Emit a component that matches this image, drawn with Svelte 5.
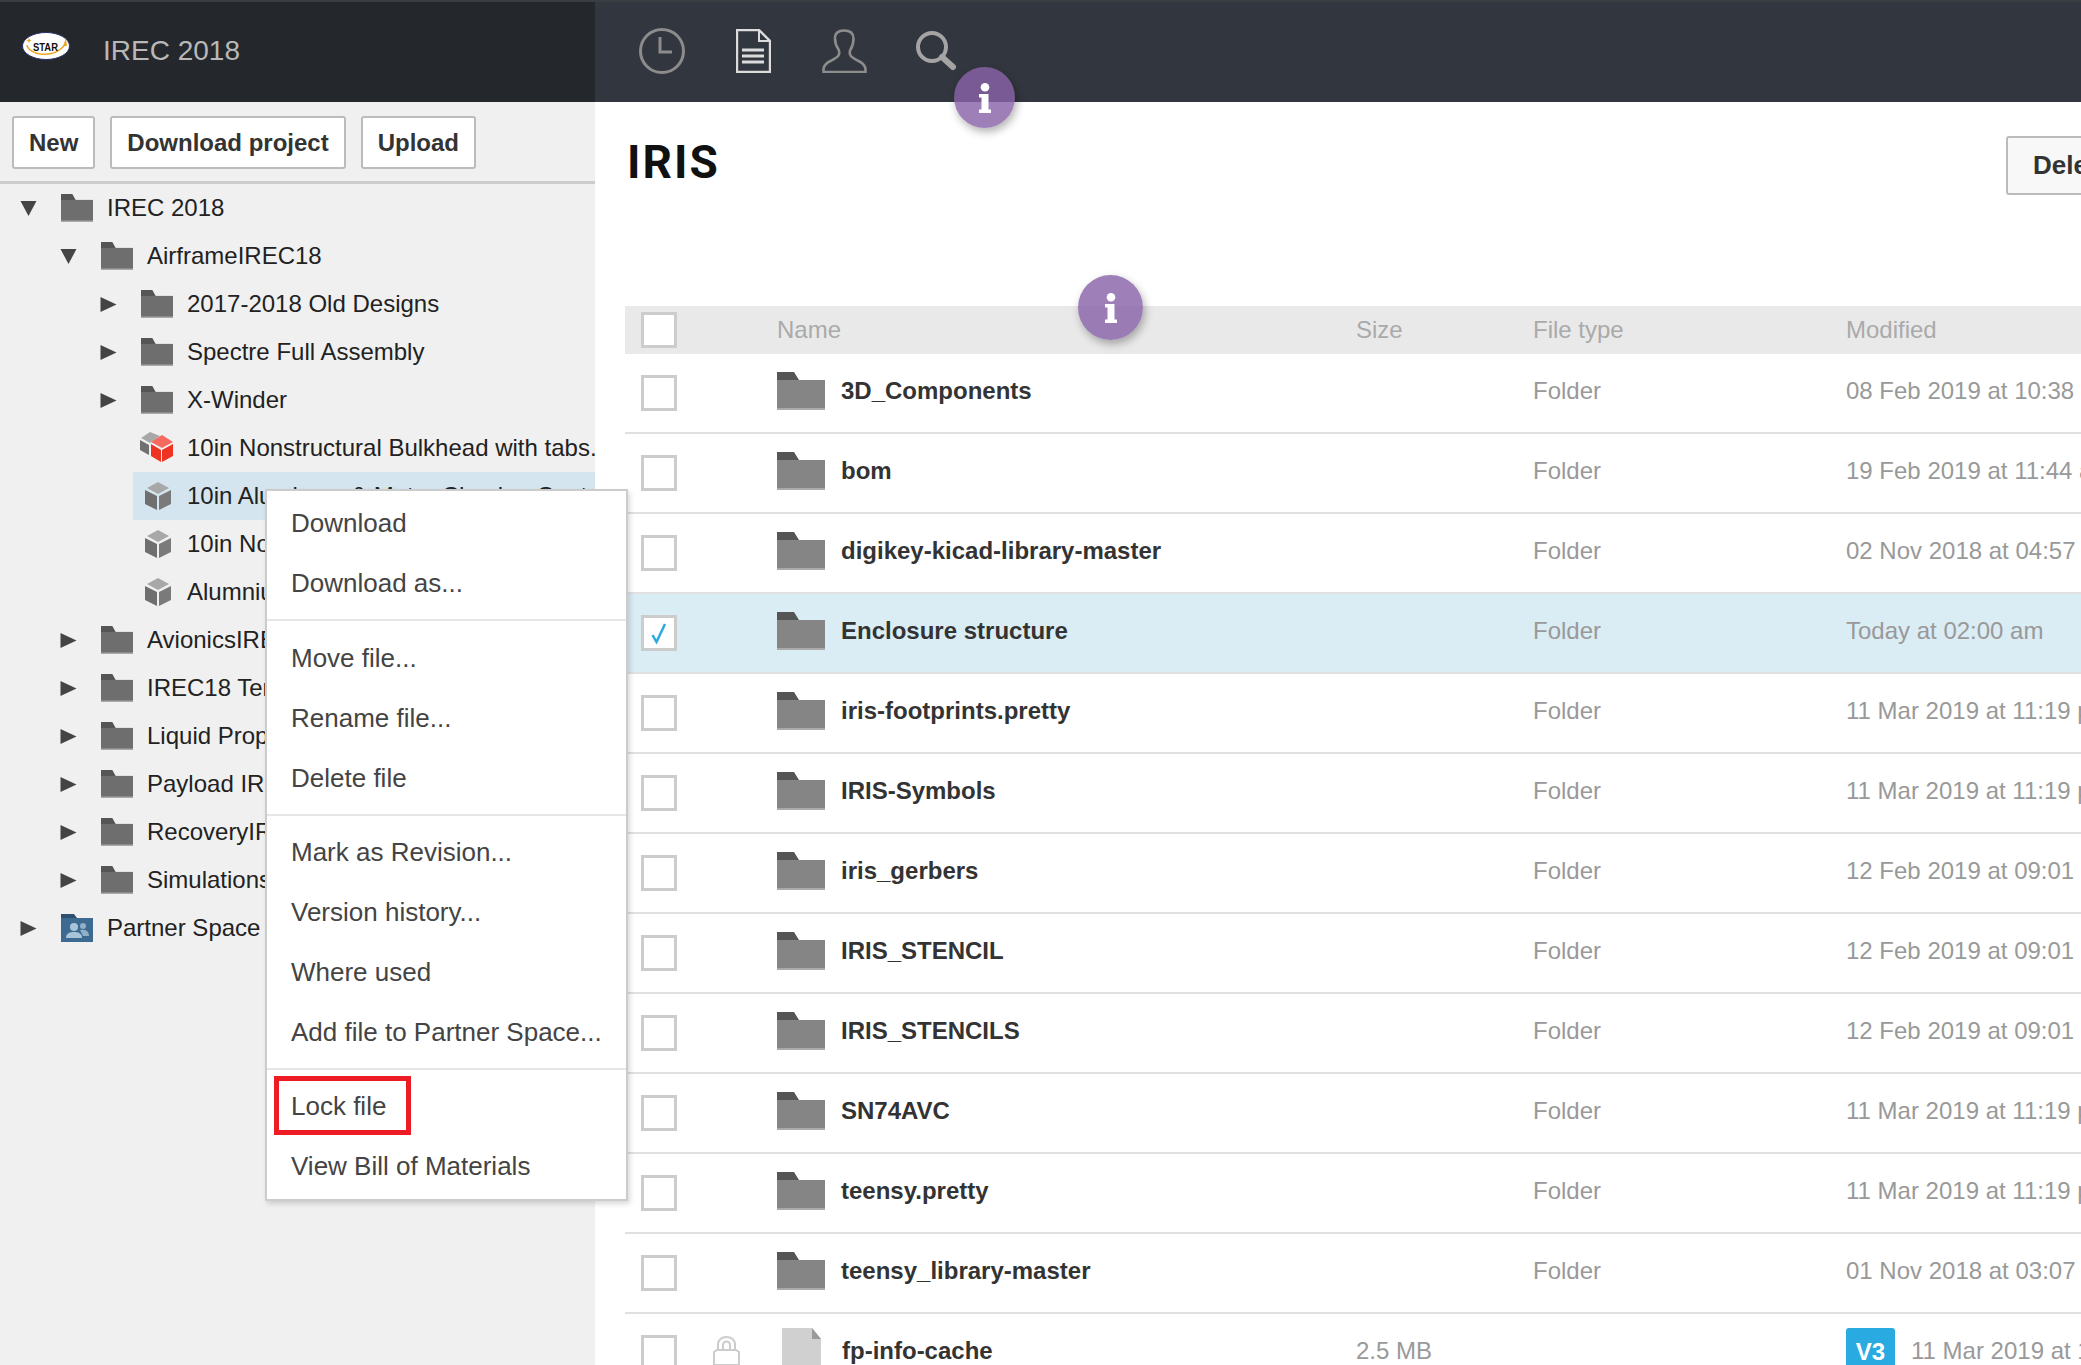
<script lang="ts">
  const tree = [
    { depth: 0, arrow: 'down', icon: 'folder', label: 'IREC 2018' },
    { depth: 1, arrow: 'down', icon: 'folder', label: 'AirframeIREC18' },
    { depth: 2, arrow: 'right', icon: 'folder', label: '2017-2018 Old Designs' },
    { depth: 2, arrow: 'right', icon: 'folder', label: 'Spectre Full Assembly' },
    { depth: 2, arrow: 'right', icon: 'folder', label: 'X-Winder' },
    { depth: 2, icon: 'redcube', label: '10in Nonstructural Bulkhead with tabs.' },
    { depth: 2, icon: 'cube', label: '10in Aluminum & Motor Chasing Coat', selected: true },
    { depth: 2, icon: 'cube', label: '10in Nonstructural Bulkhead' },
    { depth: 2, icon: 'cube', label: 'Alumnium Bulkhead' },
    { depth: 1, arrow: 'right', icon: 'folder', label: 'AvionicsIREC18' },
    { depth: 1, arrow: 'right', icon: 'folder', label: 'IREC18 Termination' },
    { depth: 1, arrow: 'right', icon: 'folder', label: 'Liquid Propulsion' },
    { depth: 1, arrow: 'right', icon: 'folder', label: 'Payload IREC18' },
    { depth: 1, arrow: 'right', icon: 'folder', label: 'RecoveryIREC18' },
    { depth: 1, arrow: 'right', icon: 'folder', label: 'Simulations' },
    { depth: 0, arrow: 'right', icon: 'partner', label: 'Partner Space' }
  ];

  const menu = [
    ['Download', 'Download as...'],
    ['Move file...', 'Rename file...', 'Delete file'],
    ['Mark as Revision...', 'Version history...', 'Where used', 'Add file to Partner Space...'],
    ['Lock file', 'View Bill of Materials']
  ];

  const rows = [
    { name: '3D_Components', modified: '08 Feb 2019 at 10:38 am' },
    { name: 'bom', modified: '19 Feb 2019 at 11:44 am' },
    { name: 'digikey-kicad-library-master', modified: '02 Nov 2018 at 04:57 pm' },
    { name: 'Enclosure structure', modified: 'Today at 02:00 am', selected: true },
    { name: 'iris-footprints.pretty', modified: '11 Mar 2019 at 11:19 pm' },
    { name: 'IRIS-Symbols', modified: '11 Mar 2019 at 11:19 pm' },
    { name: 'iris_gerbers', modified: '12 Feb 2019 at 09:01 pm' },
    { name: 'IRIS_STENCIL', modified: '12 Feb 2019 at 09:01 pm' },
    { name: 'IRIS_STENCILS', modified: '12 Feb 2019 at 09:01 pm' },
    { name: 'SN74AVC', modified: '11 Mar 2019 at 11:19 pm' },
    { name: 'teensy.pretty', modified: '11 Mar 2019 at 11:19 pm' },
    { name: 'teensy_library-master', modified: '01 Nov 2018 at 03:07 am' }
  ];
</script>

{#snippet folderIcon(cls, body)}
  <svg class={cls} viewBox="0 0 48 38" preserveAspectRatio="none" aria-hidden="true">
    <path d="M0 0h17l5 8H0z" fill="#555" />
    <path d="M0 8h48v30H0z" fill={body} />
    <path d="M0 36h48v2H0z" fill="#aaa" />
  </svg>
{/snippet}

{#snippet cubeIcon(red)}
  {#if red}
    <svg class="tree-icon red-cube" viewBox="0 0 33 30" aria-hidden="true">
      <path d="M1 6l9-6 10 4-10 7z" fill="#a8a8a8" />
      <path d="M0 8l9 5v10L0 18z" fill="#707070" />
      <path d="M22 3l11 7-11 6-11-6z" fill="#f56a60" />
      <path d="M11 12l10 6v12l-10-6z" fill="#ee3322" />
      <path d="M33 12v12l-11 6V18z" fill="#ee3322" />
    </svg>
  {:else}
    <svg class="tree-icon cube" viewBox="0 0 28 28" aria-hidden="true">
      <path d="M14 0l11 6-11 6L3 6z" fill="#a8a8a8" />
      <path d="M1 8l12 6v14L1 22z" fill="#6f6f6f" />
      <path d="M27 8v14l-12 6V14z" fill="#7a7a7a" />
    </svg>
  {/if}
{/snippet}

{#snippet infoIcon()}
  <svg class="hint-icon" viewBox="0 0 12 30" aria-hidden="true">
    <circle cx="6" cy="4.300" r="4.300" fill="#fff" />
    <path d="M0 11h9.500v15.500H12V30H0v-3.500h2.500v-12H0z" fill="#fff" />
  </svg>
{/snippet}

<div class="page">
  <header class="topbar">
    <div class="brand">
      <svg class="logo" viewBox="0 0 48 28" aria-hidden="true">
        <ellipse cx="24" cy="14" rx="23.500" ry="13.500" fill="#fff" stroke="#27306a" stroke-width="1" />
        <path d="M5 13c1 9 24 15 37 1" fill="none" stroke="#e8a623" stroke-width="1.500" />
        <path d="M41 14l3-8 1 8z" fill="#e8a623" />
        <path d="M7 6l1 2 2 0-2 1-1 2-1-2-2-1 2 0z" fill="#e8a623" />
        <text x="11" y="18.500" textLength="25" lengthAdjust="spacingAndGlyphs" class="logo-text">STAR</text>
      </svg>
      <span class="brand-name">IREC 2018</span>
    </div>
    <nav class="nav">
      <svg class="nav-icon clock" viewBox="0 0 46 46" aria-hidden="true">
        <circle cx="23" cy="23" r="21.500" fill="none" stroke="#8c8c8c" stroke-width="3" />
        <path d="M21 9v15h12" fill="none" stroke="#8c8c8c" stroke-width="3" />
      </svg>
      <svg class="nav-icon doc" viewBox="0 0 35 44" aria-hidden="true">
        <path d="M1 1h22l11 11v31H1z" fill="none" stroke="#dcdcdc" stroke-width="2.400" />
        <path d="M23 1v11h11" fill="none" stroke="#dcdcdc" stroke-width="2" />
        <path d="M6 21h22M6 27h22M6 33h22" stroke="#dcdcdc" stroke-width="3" />
      </svg>
      <svg class="nav-icon person" viewBox="0 0 45 44" aria-hidden="true">
        <path d="M22 1.500c6 0 9.500 2.500 9.500 8 0 5-1 8-3 11-1 2-1 4 0 6 1 2 4 3 7 5 5 2 7.500 5 8 8.500v3H1.500v-3c.500-3.500 3-6.500 8-8.500 3-2 6-3 7-5 1-2 1-4 0-6-2-3-3.500-6-3.500-11 0-5.500 3-8 9-8z" fill="none" stroke="#8c8c8c" stroke-width="2.600" />
      </svg>
      <svg class="nav-icon search" viewBox="0 0 41 40" aria-hidden="true">
        <circle cx="16" cy="16" r="14" fill="none" stroke="#a4a4a4" stroke-width="4" />
        <path d="M26 26l11 10" stroke="#a4a4a4" stroke-width="6" stroke-linecap="round" />
      </svg>
    </nav>
  </header>

  <div class="body">
    <aside class="sidebar">
      <div class="toolbar">
        <button class="btn">New</button>
        <button class="btn">Download project</button>
        <button class="btn">Upload</button>
      </div>
      <ul class="tree">
        {#each tree as item}
          <li class="tree-row depth-{item.depth}">
            <span class="arrow-slot">
              {#if item.arrow === 'down'}
                <svg class="arrow" viewBox="0 0 16 15" aria-hidden="true"><path d="M0 0h16L8 15z" fill="#444" /></svg>
              {:else if item.arrow === 'right'}
                <svg class="arrow" viewBox="0 0 16 15" aria-hidden="true"><path d="M0 0l16 7.500L0 15z" fill="#444" /></svg>
              {/if}
            </span>
            <span class="tree-item" class:selected={item.selected}>
              {#if item.icon === 'folder'}
                {@render folderIcon('tree-icon', '#6e6e6e')}
              {:else if item.icon === 'partner'}
                <svg class="tree-icon" viewBox="0 0 32 28" aria-hidden="true">
                  <path d="M0 0h13l3 4v4H0z" fill="#2f4f6f" />
                  <path d="M0 4h32v24H0z" fill="#3d6a90" />
                  <circle cx="13" cy="13" r="4" fill="#a9c4d8" />
                  <path d="M5 24c0-5 4-6 8-6s8 1 8 6z" fill="#a9c4d8" />
                  <circle cx="22" cy="12" r="3" fill="#8fb0c8" />
                  <path d="M19 16c4-1 9 0 9 6h-6z" fill="#8fb0c8" />
                </svg>
              {:else}
                {@render cubeIcon(item.icon === 'redcube')}
              {/if}
              <span class="tree-label">{item.label}</span>
            </span>
          </li>
        {/each}
      </ul>
    </aside>

    <main class="main">
      <div class="title-row">
        <h1>IRIS</h1>
        <button class="btn delete">Delete</button>
      </div>
      <div class="table">
        <div class="row head">
          <span class="cell check"><span class="box"></span></span>
          <span class="cell lock"></span>
          <span class="cell name">Name</span>
          <span class="cell size">Size</span>
          <span class="cell type">File type</span>
          <span class="cell modified">Modified</span>
        </div>
        {#each rows as row}
          <div class="row item" class:selected={row.selected}>
            <span class="cell check">
              <span class="box">{#if row.selected}<svg viewBox="0 0 16 22" aria-hidden="true"><path d="M1.500 13l4 7L14 2" fill="none" stroke="#29abe2" stroke-width="2.500" /></svg>{/if}</span>
            </span>
            <span class="cell lock"></span>
            <span class="cell name">
              {@render folderIcon('row-icon', '#858585')}
              <b>{row.name}</b>
            </span>
            <span class="cell size"></span>
            <span class="cell type">Folder</span>
            <span class="cell modified">{row.modified}</span>
          </div>
        {/each}
        <div class="row item">
          <span class="cell check"><span class="box"></span></span>
          <span class="cell lock">
            <svg viewBox="0 0 27 30" aria-hidden="true">
              <path d="M5 14V8a8.500 7 0 0 1 17 0v6" fill="none" stroke="#ccc" stroke-width="2" />
              <path d="M10 14V9a3.500 3.500 0 0 1 7 0v5" fill="none" stroke="#ccc" stroke-width="2" />
              <path d="M1 16l3-2h19l3 2v13H1z" fill="none" stroke="#ccc" stroke-width="2" />
            </svg>
          </span>
          <span class="cell name">
            <svg class="row-file" viewBox="0 0 39 48" aria-hidden="true">
              <path d="M0 0h30l9 11v37H0z" fill="#d0d0d0" />
              <path d="M30 0l9 11h-9z" fill="#9a9a9a" />
            </svg>
            <b>fp-info-cache</b>
          </span>
          <span class="cell size">2.5 MB</span>
          <span class="cell type"></span>
          <span class="cell modified"><span class="version">V3</span>11 Mar 2019 at 11:19 pm</span>
        </div>
      </div>
    </main>
  </div>

  <div class="menu">
    {#each menu as group}
      <ul class="menu-group">
        {#each group as label}
          <li class="menu-item"><span class:lock-box={label === 'Lock file'}>{label}</span></li>
        {/each}
      </ul>
    {/each}
  </div>

  <span class="hint hint-top">{@render infoIcon()}</span>
  <span class="hint hint-table">{@render infoIcon()}</span>
</div>

<style>
  :global(body) {
    margin: 0;
    background: #fff;
  }

  .page {
    position: relative;
    width: 2081px;
    height: 1365px;
    overflow: hidden;
    font-family: "Liberation Sans", Arial, sans-serif;
    font-size: 24px;
    color: #222;
  }

  .topbar {
    display: flex;
    height: 102px;
    box-sizing: border-box;
    border-top: 2px solid #3a3d42;
    background: #32363e;
  }

  .brand {
    width: 595px;
    display: flex;
    align-items: center;
    gap: 33px;
    padding: 0 0 2px 22px;
    box-sizing: border-box;
    background: #24272b;
  }

  .logo {
    width: 48px;
    height: 28px;
    margin-bottom: 10px;
  }

  .logo-text {
    font: 700 11px "Liberation Sans", sans-serif;
    fill: #111;
  }

  .brand-name {
    font-size: 28px;
    color: #b8b8b8;
  }

  .nav {
    display: flex;
    align-items: center;
    padding: 0 0 2px 44px;
  }

  .nav-icon {
    height: 44px;
    flex: none;
  }

  .clock {
    width: 46px;
    height: 46px;
    margin-right: 51px;
  }

  .doc {
    width: 35px;
    margin-right: 51px;
  }

  .person {
    width: 45px;
    margin-right: 49px;
  }

  .search {
    width: 41px;
    height: 40px;
  }

  .body {
    display: flex;
    height: 1263px;
  }

  .sidebar {
    width: 595px;
    flex: none;
    background: #f0f0f0;
  }

  .toolbar {
    display: flex;
    gap: 15px;
    height: 82px;
    padding: 14px 12px 0;
    box-sizing: border-box;
    border-bottom: 3px solid #ccc;
  }

  .btn {
    height: 53px;
    padding: 0 15px;
    background: #fff;
    border: 2px solid #bbb;
    border-radius: 3px;
    font: 700 24px "Liberation Sans", Arial, sans-serif;
    color: #333;
  }

  .tree {
    list-style: none;
    margin: 0;
    padding: 0;
  }

  .tree-row {
    display: flex;
    align-items: center;
    height: 48px;
    white-space: nowrap;
    overflow: hidden;
  }

  .depth-0 { padding-left: 20px; }
  .depth-1 { padding-left: 60px; }
  .depth-2 { padding-left: 100px; }

  .arrow-slot {
    display: flex;
    width: 33px;
    flex: none;
  }

  .arrow {
    width: 17px;
    height: 15px;
  }

  .tree-item {
    display: flex;
    flex: 1;
    align-items: center;
    height: 48px;
    padding-left: 8px;
    min-width: 0;
  }

  .tree-item.selected {
    background: #d4e5f0;
  }

  .tree-icon {
    width: 32px;
    height: 28px;
    flex: none;
    margin-right: 14px;
  }

  .tree-icon.cube {
    width: 28px;
    margin: 0 15px 0 3px;
  }

  .tree-icon.red-cube {
    width: 33px;
    height: 30px;
    margin: 0 14px 2px -1px;
  }

  .tree-label {
    color: #222;
  }

  .main {
    flex: 1;
    min-width: 0;
    padding-left: 30px;
    overflow: hidden;
  }

  .title-row {
    display: flex;
    justify-content: space-between;
    height: 204px;
  }

  h1 {
    margin: 30px 0 0 2px;
    font: 700 46px/60px Roboto, sans-serif;
    letter-spacing: 2px;
    color: #111;
  }

  .delete {
    width: 120px;
    height: 59px;
    margin-top: 34px;
    flex: none;
    margin-right: -45px;
    padding: 0 0 0 25px;
    background: #f8f8f8;
    text-align: left;
    font-size: 26px;
  }

  .table {
    width: 1500px;
  }

  .row {
    display: flex;
    align-items: center;
    height: 80px;
    box-sizing: border-box;
    border-bottom: 2px solid #e0e0e0;
    white-space: nowrap;
    color: #999;
  }

  .row.head {
    height: 48px;
    background: #e9e9e9;
    border-bottom: 0;
    color: #aaa;
  }

  .row.selected {
    background: #daecf4;
  }

  .cell {
    display: flex;
    align-items: center;
    flex: none;
  }

  .item .size,
  .item .type,
  .item .modified {
    margin-bottom: 4px;
  }

  .check {
    width: 80px;
    padding-left: 16px;
    box-sizing: border-box;
  }

  .box {
    display: flex;
    align-items: center;
    justify-content: center;
    width: 36px;
    height: 36px;
    box-sizing: border-box;
    border: 3px solid #ccc;
    background: #fff;
  }

  .box svg {
    width: 16px;
    height: 22px;
  }

  .lock {
    width: 72px;
    padding-left: 8px;
    box-sizing: border-box;
  }

  .lock svg {
    width: 27px;
    height: 30px;
    margin-bottom: 4px;
  }

  .name {
    width: 579px;
  }

  .name b {
    font-weight: 700;
    color: #333;
    margin-bottom: 4px;
  }

  .row-icon {
    width: 48px;
    height: 38px;
    margin: 0 16px 4px 0;
  }

  .row-file {
    width: 39px;
    height: 48px;
    margin: 0 21px 2px 5px;
  }

  .size {
    width: 177px;
  }

  .type {
    width: 313px;
  }

  .version {
    width: 49px;
    height: 48px;
    margin: 2px 16px 0 0;
    border-radius: 3px;
    background: #29abe2;
    color: #fff;
    font-weight: 700;
    text-align: center;
    line-height: 48px;
  }

  .menu {
    position: absolute;
    left: 265px;
    top: 489px;
    width: 363px;
    box-sizing: border-box;
    border: 2px solid #ccc;
    background: #fff;
    box-shadow: 2px 3px 5px rgba(0, 0, 0, 0.15);
  }

  .menu-group {
    list-style: none;
    margin: 0;
    padding: 6px 0;
    border-bottom: 2px solid #e6e6e6;
  }

  .menu-group:first-child {
    padding-top: 2px;
  }

  .menu-group:nth-child(2) {
    padding-top: 7px;
  }

  .menu-group:last-child {
    padding-bottom: 3px;
    border-bottom: 0;
  }

  .menu-item {
    display: flex;
    align-items: center;
    height: 60px;
    padding-left: 24px;
    font-size: 26px;
    color: #444;
    white-space: nowrap;
  }

  .lock-box {
    position: relative;
  }

  .lock-box::after {
    content: "";
    position: absolute;
    left: -17px;
    top: 50%;
    margin-top: -30px;
    width: 127px;
    height: 49px;
    border: 5px solid #ed1c24;
  }

  .hint {
    position: absolute;
    display: flex;
    align-items: center;
    justify-content: center;
    border-radius: 50%;
    background: rgba(137, 99, 168, 0.82);
    box-shadow: 2px 4px 8px rgba(0, 0, 0, 0.3);
  }

  .hint-icon {
    width: 12px;
    height: 30px;
  }

  .hint-top {
    left: 954px;
    top: 67px;
    width: 61px;
    height: 61px;
  }

  .hint-table {
    left: 1078px;
    top: 275px;
    width: 65px;
    height: 65px;
  }
</style>
